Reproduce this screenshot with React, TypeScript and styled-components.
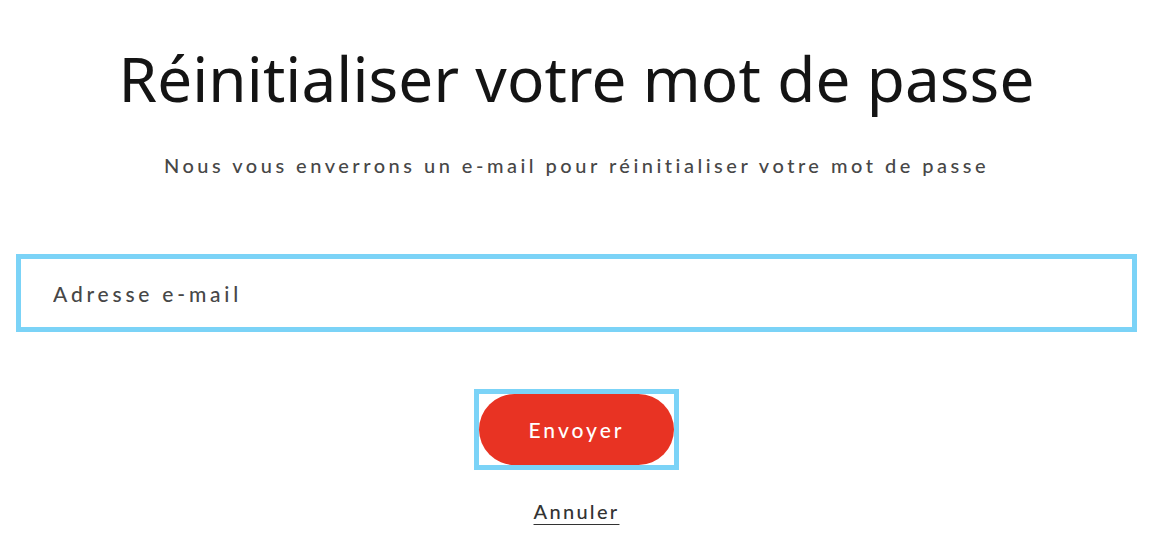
import * as React from "react";
import styled, { createGlobalStyle } from "styled-components";

const GlobalStyle = createGlobalStyle`
  html, body {
    margin: 0;
    padding: 0;
    background: #fff;
  }
  body {
    font-family: Lato, "Noto Sans", sans-serif;
    color: #111;
  }
`;

const Page = styled.main`
  display: flex;
  flex-direction: column;
  align-items: center;
  padding: 40px 23px 0 16px;
`;

const Title = styled.h1`
  margin: 0;
  font-family: "Noto Sans", Lato, sans-serif;
  font-size: 62px;
  font-weight: 400;
  line-height: 76px;
  color: #141414;
  letter-spacing: 0.1px;
`;

const Subtitle = styled.p`
  margin: 35px 0 0;
  font-size: 20px;
  font-weight: 500;
  line-height: 28px;
  color: #474747;
  letter-spacing: 3.5px;
`;

const Form = styled.form`
  display: flex;
  flex-direction: column;
  align-items: center;
  width: 100%;
  margin-top: 75px;
`;

const EmailInput = styled.input`
  box-sizing: border-box;
  width: 100%;
  height: 78px;
  border: 5px solid #7bd3f7;
  outline: none;
  padding: 0 32px;
  font-family: Lato, "Noto Sans", sans-serif;
  font-size: 21px;
  font-weight: 500;
  letter-spacing: 3.8px;
  color: #474747;
  background: #fff;

  &::placeholder {
    color: #474747;
    opacity: 1;
  }
`;

const FocusRing = styled.div`
  margin-top: 57px;
  border: 5px solid #7bd3f7;
  display: flex;
`;

const SubmitButton = styled.button`
  width: 195px;
  height: 71px;
  padding: 0;
  border: none;
  border-radius: 36px;
  background: #e83323;
  color: #fff;
  font-family: Lato, "Noto Sans", sans-serif;
  font-size: 21px;
  font-weight: 500;
  letter-spacing: 3px;
  cursor: pointer;
`;

const CancelLink = styled.a`
  margin-top: 27px;
  font-size: 20px;
  font-weight: 500;
  line-height: 28px;
  letter-spacing: 2.3px;
  color: #333;
  text-decoration: underline;
  text-underline-offset: 5px;
  text-decoration-thickness: 2px;
`;

export default function App() {
  return (
    <>
      <GlobalStyle />
      <Page>
        <Title>Réinitialiser votre mot de passe</Title>
        <Subtitle>
          Nous vous enverrons un e-mail pour réinitialiser votre mot de passe
        </Subtitle>
        <Form onSubmit={(e) => e.preventDefault()}>
          <EmailInput type="email" placeholder="Adresse e-mail" />
          <FocusRing>
            <SubmitButton type="submit">Envoyer</SubmitButton>
          </FocusRing>
          <CancelLink href="#">Annuler</CancelLink>
        </Form>
      </Page>
    </>
  );
}
